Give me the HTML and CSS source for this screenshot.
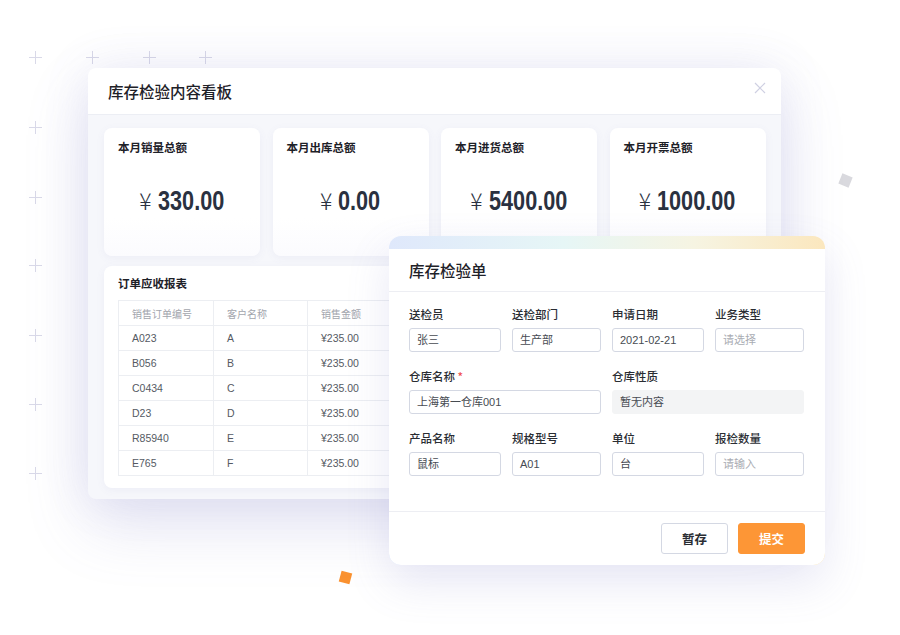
FILE: index.html
```html
<!DOCTYPE html>
<html lang="zh">
<head>
<meta charset="utf-8">
<title>库存检验</title>
<link rel="stylesheet" href="styles.css">
</head>
<body>
<div class="stage">
  <div class="plus" style="left:35px;top:57px"></div>
  <div class="plus" style="left:92px;top:57px"></div>
  <div class="plus" style="left:149px;top:57px"></div>
  <div class="plus" style="left:205px;top:57px"></div>
  <div class="plus" style="left:35px;top:127px"></div>
  <div class="plus" style="left:35px;top:197px"></div>
  <div class="plus" style="left:35px;top:265px"></div>
  <div class="plus" style="left:35px;top:335px"></div>
  <div class="plus" style="left:35px;top:404px"></div>
  <div class="plus" style="left:35px;top:473px"></div>

  <div class="diamond grey"></div>
  <div class="diamond orange"></div>

  <section class="board">
    <header class="board-head">
      <h1 class="board-title">库存检验内容看板</h1>
      <svg class="close" width="12" height="12" viewBox="0 0 12 12"><path d="M1 1L11 11M11 1L1 11" stroke="#cfd0e2" stroke-width="1.2" fill="none"/></svg>
    </header>
    <div class="board-body">
      <div class="stats">
        <div class="stat"><div class="stat-label">本月销量总额</div><div class="stat-value"><span class="yen">¥</span><span class="num">330.00</span></div></div>
        <div class="stat"><div class="stat-label">本月出库总额</div><div class="stat-value"><span class="yen">¥</span><span class="num">0.00</span></div></div>
        <div class="stat"><div class="stat-label">本月进货总额</div><div class="stat-value"><span class="yen">¥</span><span class="num">5400.00</span></div></div>
        <div class="stat"><div class="stat-label">本月开票总额</div><div class="stat-value"><span class="yen">¥</span><span class="num">1000.00</span></div></div>
      </div>
      <div class="report">
        <div class="report-title">订单应收报表</div>
        <table class="grid">
          <thead><tr><th>销售订单编号</th><th>客户名称</th><th>销售金额</th><th></th></tr></thead>
          <tbody>
            <tr><td>A023</td><td>A</td><td>¥235.00</td><td></td></tr>
            <tr><td>B056</td><td>B</td><td>¥235.00</td><td></td></tr>
            <tr><td>C0434</td><td>C</td><td>¥235.00</td><td></td></tr>
            <tr><td>D23</td><td>D</td><td>¥235.00</td><td></td></tr>
            <tr><td>R85940</td><td>E</td><td>¥235.00</td><td></td></tr>
            <tr><td>E765</td><td>F</td><td>¥235.00</td><td></td></tr>
          </tbody>
        </table>
      </div>
    </div>
  </section>

  <section class="form">
    <div class="form-inner">
      <header class="form-head"><h2 class="form-title">库存检验单</h2></header>
      <div class="form-body">
        <div class="field"><label>送检员</label><div class="input">张三</div></div>
        <div class="field"><label>送检部门</label><div class="input">生产部</div></div>
        <div class="field"><label>申请日期</label><div class="input">2021-02-21</div></div>
        <div class="field"><label>业务类型</label><div class="input ph">请选择</div></div>
        <div class="field wide"><label>仓库名称 <span class="req">*</span></label><div class="input">上海第一仓库001</div></div>
        <div class="field wide"><label>仓库性质</label><div class="input ro">暂无内容</div></div>
        <div class="field"><label>产品名称</label><div class="input">鼠标</div></div>
        <div class="field"><label>规格型号</label><div class="input">A01</div></div>
        <div class="field"><label>单位</label><div class="input">台</div></div>
        <div class="field"><label>报检数量</label><div class="input ph">请输入</div></div>
      </div>
      <footer class="form-foot">
        <button class="btn">暂存</button>
        <button class="btn primary">提交</button>
      </footer>
    </div>
  </section>
</div>
</body>
</html>
```
FILE: styles.css
```css
* { box-sizing: border-box; }
html, body { margin: 0; padding: 0; background: #fff; }
body {
  font-family: "Noto Sans CJK SC", "Noto Sans", sans-serif;
  color: #222;
}
.stage {
  position: relative;
  width: 900px;
  height: 635px;
  overflow: hidden;
  background: #fff;
}
.plus {
  position: absolute;
  width: 13px;
  height: 13px;
  margin: -6px 0 0 -6px;
}
.plus::before, .plus::after {
  content: "";
  position: absolute;
  background: #d9d9e8;
}
.plus::before { left: 6px; top: 0; width: 1.3px; height: 13px; }
.plus::after { top: 6px; left: 0; height: 1.3px; width: 13px; }

.diamond { position: absolute; width: 11px; height: 11px; }
.diamond.grey { left: 840px; top: 175px; background: #d9d9de; transform: rotate(22deg); }
.diamond.orange { left: 340px; top: 572px; background: #fb922f; transform: rotate(15deg); }

/* Dashboard window */
.board {
  position: absolute;
  left: 88px;
  top: 68px;
  width: 693px;
  height: 431px;
  border-radius: 8px;
  background: #f6f7fb;
  box-shadow: 0 26px 64px rgba(105, 105, 190, 0.18), 0 0 48px rgba(120, 120, 200, 0.12);
  overflow: hidden;
  display: flex;
  flex-direction: column;
}
.board-head {
  height: 47px;
  background: #fff;
  border-bottom: 1px solid #eceef4;
  display: flex;
  align-items: center;
  justify-content: space-between;
  padding: 0 15px 0 20px;
  flex: none;
}
.board-title { margin: 0; font-size: 15.5px; font-weight: 500; color: #1e2128; }
.close { margin-top: -6px; }
.board-body {
  flex: 1;
  padding: 13px 15px 11px 16px;
  display: flex;
  flex-direction: column;
  gap: 10px;
}
.stats {
  display: grid;
  grid-template-columns: 156px 156px 156px 156px;
  gap: 12.5px;
}
.stat {
  height: 128px;
  background: linear-gradient(180deg, #ffffff 70%, #fbfbfe 100%);
  border-radius: 8px;
  box-shadow: 0 2px 8px rgba(120, 120, 180, 0.07);
  padding: 11px 14px 0;
  display: flex;
  flex-direction: column;
}
.stat-label { font-size: 11.5px; font-weight: 700; color: #1e2128; line-height: 16px; }
.stat-value {
  margin-top: 28px;
  display: flex;
  justify-content: center;
  align-items: baseline;
  gap: 6px;
  color: #2a3140;
}
.yen { font-family: "Noto Sans CJK SC", sans-serif; font-size: 23px; font-weight: 300; }
.num {
  display: inline-block;
  font-family: "Liberation Sans", sans-serif;
  font-size: 28.5px;
  font-weight: 700;
  transform: scaleX(0.76);
  transform-origin: left center;
  margin-right: calc(-0.24 * var(--w, 80px));
}
.stat:nth-child(1) .num { --w: 84px; }
.stat:nth-child(2) .num { --w: 54px; }
.stat:nth-child(3) .num { --w: 100px; }
.stat:nth-child(4) .num { --w: 100px; }

.report {
  flex: 1;
  background: #fff;
  border-radius: 8px;
  box-shadow: 0 2px 8px rgba(120, 120, 180, 0.07);
  padding: 9px 14px 12px;
}
.report-title { font-size: 11.5px; font-weight: 700; color: #1e2128; line-height: 16px; margin-bottom: 9px; }
.grid {
  border-collapse: collapse;
  width: 100%;
  font-family: "Liberation Sans", "Noto Sans CJK SC", sans-serif;
  font-size: 10.5px;
}
.grid th, .grid td {
  border: 1px solid #eceef2;
  height: 25px;
  padding: 0 13px;
  text-align: left;
  white-space: nowrap;
}
.grid th { font-family: "Noto Sans CJK SC", sans-serif; font-weight: 400; color: #a2a5ad; font-size: 10px; }
.grid td { color: #555a63; }
.grid th:nth-child(1) { width: 95px; }
.grid th:nth-child(2) { width: 94px; }
.grid th:nth-child(3) { width: 94px; }

/* Form window */
.form {
  position: absolute;
  left: 389px;
  top: 236px;
  width: 436px;
  height: 329px;
  border-radius: 12px;
  background: linear-gradient(90deg, #dfe8fb 0%, #e6f6f6 40%, #f6f4e2 70%, #fbe7be 100%);
  box-shadow: 0 18px 44px rgba(110, 110, 190, 0.16);
  padding-top: 13px;
  overflow: hidden;
}
.form-inner {
  background: #fff;
  height: 100%;
  border-radius: 0 0 12px 12px;
  display: flex;
  flex-direction: column;
}
.form-head {
  height: 43px;
  border-bottom: 1px solid #edeef3;
  display: flex;
  align-items: center;
  padding: 0 20px;
}
.form-title { margin: 0; font-size: 15.5px; font-weight: 500; color: #1e2128; }
.form-body {
  display: grid;
  grid-template-columns: 92px 89px 92px 89px;
  column-gap: 11px;
  row-gap: 15px;
  padding: 13px 20px 35px;
  border-bottom: 1px solid #edeef3;
}
.field { display: flex; flex-direction: column; gap: 5px; }
.field.wide { grid-column: span 2; }
.field label { font-size: 11.5px; font-weight: 500; color: #2a2d33; line-height: 18px; }
.req { color: #f05050; }
.input {
  height: 24px;
  border: 1px solid #d4d8e3;
  border-radius: 3px;
  padding: 0 7px;
  font-size: 11px;
  line-height: 22px;
  color: #474b52;
  font-family: "Liberation Sans", "Noto Sans CJK SC", sans-serif;
}
.input.ph { color: #a9acb3; }
.input.ro { background: #f3f4f5; border-color: #f3f4f5; }
.form-foot {
  flex: 1;
  display: flex;
  justify-content: flex-end;
  align-items: flex-start;
  gap: 10px;
  padding: 11px 20px 0;
}
.btn {
  width: 67px;
  height: 31px;
  border: 1px solid #d4d8e3;
  border-radius: 3px;
  background: #fff;
  font-family: "Noto Sans CJK SC", sans-serif;
  font-size: 12.5px;
  font-weight: 700;
  color: #2a2d33;
  padding: 0;
}
.btn.primary { background: #fd9636; border-color: #fd9636; color: #fff; }
```
